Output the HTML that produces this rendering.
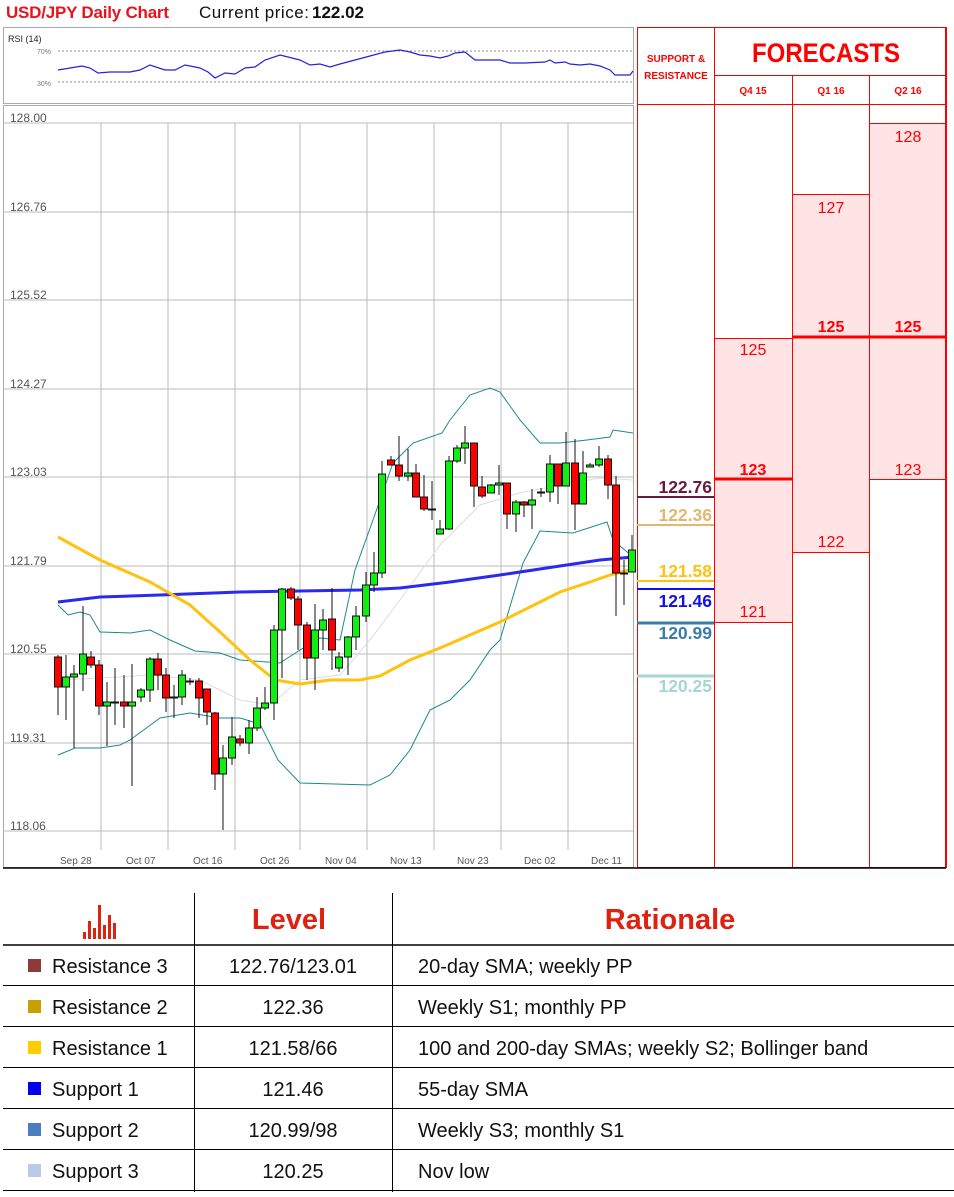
<!DOCTYPE html>
<html><head><meta charset="utf-8"><style>
body{margin:0;background:#fff;width:954px;height:1192px;overflow:hidden;font-family:"Liberation Sans",sans-serif}
svg text{font-family:"Liberation Sans",sans-serif}
</style></head><body>
<svg width="954" height="1192" viewBox="0 0 954 1192" xmlns="http://www.w3.org/2000/svg">
<text x="6" y="18" font-size="17" font-weight="bold" fill="#e8141c" textLength="163">USD/JPY Daily Chart</text>
<text x="199" y="18" font-size="17" fill="#111" textLength="110">Current price:</text>
<text x="312" y="18" font-size="17" font-weight="bold" fill="#111">122.02</text>
<rect x="3.5" y="27.5" width="630" height="76" fill="#fff" stroke="#aaa"/>
<text x="8" y="42" font-size="9" fill="#222">RSI (14)</text>
<text x="37" y="54" font-size="7" fill="#777">70%</text>
<text x="37" y="86" font-size="7" fill="#777">30%</text>
<line x1="58" y1="51" x2="633" y2="51" stroke="#666" stroke-dasharray="2,2" stroke-width="0.8"/>
<line x1="58" y1="82" x2="633" y2="82" stroke="#666" stroke-dasharray="2,2" stroke-width="0.8"/>
<polyline fill="none" stroke="#2222dd" stroke-width="1.2" points="58,70 70,68 82,66 90,68 98,73 110,72 130,72 140,70 150,65 165,70 175,70 185,65 200,68 208,72 215,78 225,73 235,74 245,68 255,67 265,60 280,55 300,60 310,65 320,64 330,67 340,64 355,60 370,56 385,52 400,50 410,52 420,55 430,56 440,58 448,56 455,53 465,52 475,60 490,60 500,60 510,63 525,63 545,62 550,60 555,63 565,62 570,64 580,65 590,64 600,66 610,70 615,75 630,75 633,71"/>
<rect x="3.5" y="105.5" width="630" height="762" fill="#fff" stroke="#aaa"/>
<g stroke="#bbb" stroke-width="1">
<line x1="3" y1="123" x2="633" y2="123"/><line x1="3" y1="212" x2="633" y2="212"/><line x1="3" y1="300" x2="633" y2="300"/><line x1="3" y1="389" x2="633" y2="389"/><line x1="3" y1="477" x2="633" y2="477"/><line x1="3" y1="566" x2="633" y2="566"/><line x1="3" y1="654" x2="633" y2="654"/><line x1="3" y1="743" x2="633" y2="743"/><line x1="3" y1="831" x2="633" y2="831"/>
<line x1="101" y1="123" x2="101" y2="850"/><line x1="168" y1="123" x2="168" y2="850"/><line x1="235" y1="123" x2="235" y2="850"/><line x1="300" y1="123" x2="300" y2="850"/><line x1="367" y1="123" x2="367" y2="850"/><line x1="434" y1="123" x2="434" y2="850"/><line x1="501" y1="123" x2="501" y2="850"/><line x1="568" y1="123" x2="568" y2="850"/>
</g>
<g font-size="12" fill="#555">
<text x="10" y="122">128.00</text><text x="10" y="211">126.76</text><text x="10" y="299">125.52</text><text x="10" y="388">124.27</text><text x="10" y="476">123.03</text><text x="10" y="565">121.79</text><text x="10" y="653">120.55</text><text x="10" y="742">119.31</text><text x="10" y="830">118.06</text>
</g>
<g font-size="10" fill="#555">
<text x="60" y="864">Sep 28</text><text x="126" y="864">Oct 07</text><text x="193" y="864">Oct 16</text><text x="260" y="864">Oct 26</text><text x="325" y="864">Nov 04</text><text x="390" y="864">Nov 13</text><text x="457" y="864">Nov 23</text><text x="524" y="864">Dec 02</text><text x="591" y="864">Dec 11</text>
</g>
<polyline fill="none" stroke="#ddd" stroke-width="1" points="58,680 100,678 150,675 200,680 240,700 270,705 300,680 340,675 370,640 400,600 440,545 480,505 520,493 560,485 600,478 633,480"/>
<polyline fill="none" stroke="#1a8a8a" stroke-width="1" points="58,605 68,615 80,612 90,615 100,632 130,633 150,630 170,640 195,651 220,653 240,660 280,663 300,650 320,638 340,640 355,570 373,520 393,463 413,443 442,433 450,420 470,395 490,388 500,392 520,420 540,443 560,443 587,440 610,437 613,430 633,433"/>
<polyline fill="none" stroke="#1a8a8a" stroke-width="1" points="58,755 75,748 100,748 120,745 130,740 160,718 190,713 220,718 240,718 260,724 278,760 300,783 370,785 390,775 410,750 430,710 450,700 470,680 490,650 500,640 523,563 540,531 573,533 607,522 613,540 633,557"/>
<polyline fill="none" stroke="#2a2aee" stroke-width="3" points="58,602 100,597 160,595 240,592 300,591 360,590 400,588 450,582 500,575 560,566 600,560 633,557"/>
<polyline fill="none" stroke="#ffc20e" stroke-width="3" points="58,537 100,560 150,582 190,605 220,632 250,660 275,680 300,684 330,680 360,680 380,676 410,660 440,648 470,635 500,622 530,607 560,592 590,582 610,575 633,569"/>
<g stroke="#111" stroke-width="1">
<line x1="58" y1="655" x2="58" y2="715"/><rect x="54.5" y="657" width="7" height="30" fill="#f00"/>
<line x1="66" y1="655" x2="66" y2="720"/><rect x="62.5" y="677" width="7" height="10" fill="#1e1"/>
<line x1="74" y1="665" x2="74" y2="748"/><rect x="70.5" y="674" width="7" height="3" fill="#1e1"/>
<line x1="83" y1="606" x2="83" y2="691"/><rect x="79.5" y="654" width="7" height="20" fill="#1e1"/>
<line x1="91" y1="651" x2="91" y2="668"/><rect x="87.5" y="657" width="7" height="8" fill="#f00"/>
<line x1="99" y1="660" x2="99" y2="715"/><rect x="95.5" y="665" width="7" height="41" fill="#f00"/>
<line x1="107" y1="682" x2="107" y2="746"/><rect x="103.5" y="702" width="7" height="4" fill="#1e1"/>
<line x1="115" y1="668" x2="115" y2="725"/><rect x="111.5" y="702" width="7" height="1" fill="#1e1"/>
<line x1="124" y1="675" x2="124" y2="728"/><rect x="120.5" y="702" width="7" height="4" fill="#f00"/>
<line x1="132" y1="664" x2="132" y2="786"/><rect x="128.5" y="702" width="7" height="4" fill="#1e1"/>
<line x1="141" y1="688" x2="141" y2="702"/><rect x="137.5" y="690" width="7" height="7" fill="#1e1"/>
<line x1="150" y1="657" x2="150" y2="702"/><rect x="146.5" y="659" width="7" height="31" fill="#1e1"/>
<line x1="158" y1="653" x2="158" y2="690"/><rect x="154.5" y="659" width="7" height="16" fill="#f00"/>
<line x1="166" y1="668" x2="166" y2="712"/><rect x="162.5" y="675" width="7" height="23" fill="#f00"/>
<line x1="174" y1="685" x2="174" y2="718"/><rect x="170.5" y="697" width="7" height="1" fill="#111"/>
<line x1="182" y1="670" x2="182" y2="705"/><rect x="178.5" y="675" width="7" height="22" fill="#1e1"/>
<line x1="190" y1="678" x2="190" y2="685"/><rect x="186.5" y="681" width="7" height="1" fill="#f00"/>
<line x1="199" y1="678" x2="199" y2="718"/><rect x="195.5" y="681" width="7" height="17" fill="#f00"/>
<line x1="207" y1="689" x2="207" y2="725"/><rect x="203.5" y="689" width="7" height="23" fill="#f00"/>
<line x1="215" y1="712" x2="215" y2="790"/><rect x="211.5" y="713" width="7" height="61" fill="#f00"/>
<line x1="223" y1="745" x2="223" y2="830"/><rect x="219.5" y="758" width="7" height="16" fill="#1e1"/>
<line x1="232" y1="717" x2="232" y2="765"/><rect x="228.5" y="737" width="7" height="21" fill="#1e1"/>
<line x1="240" y1="735" x2="240" y2="746"/><rect x="236.5" y="739" width="7" height="4" fill="#f00"/>
<line x1="249" y1="720" x2="249" y2="754"/><rect x="245.5" y="728" width="7" height="15" fill="#1e1"/>
<line x1="257" y1="697" x2="257" y2="731"/><rect x="253.5" y="708" width="7" height="20" fill="#1e1"/>
<line x1="265" y1="687" x2="265" y2="710"/><rect x="261.5" y="703" width="7" height="5" fill="#1e1"/>
<line x1="274" y1="625" x2="274" y2="720"/><rect x="270.5" y="630" width="7" height="73" fill="#1e1"/>
<line x1="282" y1="588" x2="282" y2="678"/><rect x="278.5" y="589" width="7" height="41" fill="#1e1"/>
<line x1="291" y1="587" x2="291" y2="600"/><rect x="287.5" y="589" width="7" height="9" fill="#f00"/>
<line x1="298" y1="596" x2="298" y2="650"/><rect x="294.5" y="599" width="7" height="26" fill="#f00"/>
<line x1="307" y1="622" x2="307" y2="680"/><rect x="303.5" y="625" width="7" height="33" fill="#f00"/>
<line x1="315" y1="604" x2="315" y2="690"/><rect x="311.5" y="630" width="7" height="28" fill="#1e1"/>
<line x1="323" y1="609" x2="323" y2="650"/><rect x="319.5" y="620" width="7" height="10" fill="#1e1"/>
<line x1="332" y1="588" x2="332" y2="670"/><rect x="328.5" y="619" width="7" height="31" fill="#f00"/>
<line x1="339" y1="652" x2="339" y2="672"/><rect x="335.5" y="657" width="7" height="11" fill="#1e1"/>
<line x1="348" y1="636" x2="348" y2="675"/><rect x="344.5" y="637" width="7" height="20" fill="#1e1"/>
<line x1="356" y1="606" x2="356" y2="650"/><rect x="352.5" y="616" width="7" height="21" fill="#1e1"/>
<line x1="366" y1="572" x2="366" y2="622"/><rect x="362.5" y="585" width="7" height="31" fill="#1e1"/>
<line x1="374" y1="552" x2="374" y2="592"/><rect x="370.5" y="573" width="7" height="12" fill="#1e1"/>
<line x1="382" y1="461" x2="382" y2="578"/><rect x="378.5" y="474" width="7" height="99" fill="#1e1"/>
<line x1="391" y1="456" x2="391" y2="465"/><rect x="387.5" y="460" width="7" height="5" fill="#f00"/>
<line x1="399" y1="436" x2="399" y2="481"/><rect x="395.5" y="465" width="7" height="11" fill="#f00"/>
<line x1="408" y1="449" x2="408" y2="481"/><rect x="404.5" y="473" width="7" height="3" fill="#1e1"/>
<line x1="416" y1="464" x2="416" y2="497"/><rect x="412.5" y="473" width="7" height="24" fill="#f00"/>
<line x1="424" y1="475" x2="424" y2="511"/><rect x="420.5" y="497" width="7" height="12" fill="#f00"/>
<line x1="432" y1="481" x2="432" y2="520"/><rect x="428.5" y="509" width="7" height="1" fill="#111"/>
<line x1="440" y1="520" x2="440" y2="534"/><rect x="436.5" y="529" width="7" height="5" fill="#1e1"/>
<line x1="449" y1="456" x2="449" y2="530"/><rect x="445.5" y="461" width="7" height="68" fill="#1e1"/>
<line x1="457" y1="445" x2="457" y2="463"/><rect x="453.5" y="448" width="7" height="13" fill="#1e1"/>
<line x1="465" y1="426" x2="465" y2="464"/><rect x="461.5" y="443" width="7" height="5" fill="#1e1"/>
<line x1="474" y1="443" x2="474" y2="507"/><rect x="470.5" y="443" width="7" height="43" fill="#f00"/>
<line x1="482" y1="476" x2="482" y2="498"/><rect x="478.5" y="487" width="7" height="9" fill="#f00"/>
<line x1="491" y1="484" x2="491" y2="493"/><rect x="487.5" y="485" width="7" height="8" fill="#1e1"/>
<line x1="499" y1="465" x2="499" y2="495"/><rect x="495.5" y="483" width="7" height="2" fill="#1e1"/>
<line x1="507" y1="483" x2="507" y2="529"/><rect x="503.5" y="483" width="7" height="31" fill="#f00"/>
<line x1="516" y1="500" x2="516" y2="532"/><rect x="512.5" y="502" width="7" height="12" fill="#1e1"/>
<line x1="524" y1="501" x2="524" y2="517"/><rect x="520.5" y="502" width="7" height="3" fill="#f00"/>
<line x1="532" y1="489" x2="532" y2="529"/><rect x="528.5" y="500" width="7" height="5" fill="#1e1"/>
<line x1="541" y1="488" x2="541" y2="497"/><rect x="537.5" y="492" width="7" height="1" fill="#111"/>
<line x1="550" y1="455" x2="550" y2="502"/><rect x="546.5" y="464" width="7" height="28" fill="#1e1"/>
<line x1="558" y1="464" x2="558" y2="504"/><rect x="554.5" y="464" width="7" height="22" fill="#f00"/>
<line x1="566" y1="432" x2="566" y2="486"/><rect x="562.5" y="463" width="7" height="23" fill="#1e1"/>
<line x1="575" y1="439" x2="575" y2="530"/><rect x="571.5" y="463" width="7" height="41" fill="#f00"/>
<line x1="583" y1="451" x2="583" y2="504"/><rect x="579.5" y="473" width="7" height="31" fill="#1e1"/>
<line x1="590" y1="463" x2="590" y2="467"/><rect x="586.5" y="465" width="7" height="2" fill="#1e1"/>
<line x1="599" y1="446" x2="599" y2="467"/><rect x="595.5" y="459" width="7" height="6" fill="#1e1"/>
<line x1="608" y1="455" x2="608" y2="499"/><rect x="604.5" y="459" width="7" height="26" fill="#f00"/>
<line x1="616" y1="476" x2="616" y2="616"/><rect x="612.5" y="485" width="7" height="88" fill="#f00"/>
<line x1="624" y1="560" x2="624" y2="605"/><rect x="620.5" y="573" width="7" height="1" fill="#111"/>
<line x1="632" y1="535" x2="632" y2="572"/><rect x="628.5" y="550" width="7" height="22" fill="#1e1"/>
</g>
<rect x="869" y="123" width="77" height="214" fill="#ffe4e6"/>
<rect x="792" y="194" width="77" height="143" fill="#ffe4e6"/>
<rect x="714" y="338" width="232" height="141" fill="#ffe4e6"/>
<rect x="714" y="479" width="155" height="73" fill="#ffe4e6"/>
<rect x="714" y="552" width="78" height="70" fill="#ffe4e6"/>
<g stroke="#f00" stroke-width="1" fill="none">
<rect x="637.5" y="27.5" width="309" height="840"/>
<line x1="946" y1="27" x2="946" y2="868" stroke-width="2"/>
<line x1="714.5" y1="27" x2="714.5" y2="868"/>
<line x1="792.5" y1="75" x2="792.5" y2="868"/>
<line x1="869.5" y1="75" x2="869.5" y2="868"/>
<line x1="714" y1="75.5" x2="946" y2="75.5"/>
<line x1="637" y1="104.5" x2="946" y2="104.5"/>
<line x1="869" y1="123.5" x2="946" y2="123.5"/>
<line x1="792" y1="194.5" x2="869" y2="194.5"/>
<line x1="714" y1="338.5" x2="792" y2="338.5"/>
<line x1="792" y1="337" x2="946" y2="337" stroke-width="3"/>
<line x1="714" y1="479" x2="792" y2="479" stroke-width="3"/>
<line x1="869" y1="479.5" x2="946" y2="479.5"/>
<line x1="792" y1="552.5" x2="869" y2="552.5"/>
<line x1="714" y1="622.5" x2="792" y2="622.5"/>
</g>
<g fill="#f00" text-anchor="middle">
<text x="676" y="62" font-size="10" font-weight="bold">SUPPORT &amp;</text>
<text x="676" y="79" font-size="10" font-weight="bold">RESISTANCE</text>
<text x="826" y="62" font-size="27" font-weight="bold" textLength="148" lengthAdjust="spacingAndGlyphs">FORECASTS</text>
<text x="753" y="94" font-size="10" font-weight="bold">Q4 15</text>
<text x="831" y="94" font-size="10" font-weight="bold">Q1 16</text>
<text x="908" y="94" font-size="10" font-weight="bold">Q2 16</text>
<g font-size="16"><text x="908" y="142">128</text><text x="831" y="213">127</text><text x="753" y="355">125</text><text x="908" y="475">123</text><text x="831" y="547">122</text><text x="753" y="617">121</text></g>
<g font-size="16" font-weight="bold"><text x="831" y="332">125</text><text x="908" y="332">125</text><text x="753" y="475">123</text></g>
</g>
<g font-size="17.5" font-weight="bold" text-anchor="end">
<text x="712" y="493" fill="#6a1a3a">122.76</text>
<text x="712" y="521" fill="#e0b870">122.36</text>
<text x="712" y="577" fill="#ffc20e">121.58</text>
<text x="712" y="607" fill="#1010ee">121.46</text>
<text x="712" y="639" fill="#3a7ea8">120.99</text>
<text x="712" y="692" fill="#a8d4d4">120.25</text>
</g>
<line x1="637" y1="497" x2="714" y2="497" stroke="#6a1a3a" stroke-width="2"/>
<line x1="637" y1="525" x2="714" y2="525" stroke="#e0b870" stroke-width="2"/>
<line x1="637" y1="581" x2="714" y2="581" stroke="#ffc20e" stroke-width="2"/>
<line x1="637" y1="589" x2="714" y2="589" stroke="#1010ee" stroke-width="2"/>
<line x1="637" y1="623" x2="714" y2="623" stroke="#3a7ea8" stroke-width="3"/>
<line x1="637" y1="676" x2="714" y2="676" stroke="#a8d4d4" stroke-width="3"/>
<line x1="3" y1="868" x2="946" y2="868" stroke="#000" stroke-width="1.5"/>
<g fill="#dd2211">
<rect x="83" y="932" width="3" height="7"/><rect x="88" y="921" width="3" height="18"/><rect x="93" y="928" width="3" height="11"/><rect x="98" y="905" width="3" height="34"/><rect x="103" y="925" width="3" height="14"/><rect x="108" y="915" width="3" height="24"/><rect x="113" y="923" width="3" height="16"/>
</g>
<text x="289" y="929" font-size="29" font-weight="bold" fill="#dd2211" text-anchor="middle">Level</text>
<text x="670" y="929" font-size="29" font-weight="bold" fill="#dd2211" text-anchor="middle">Rationale</text>
<g stroke="#000" stroke-width="1">
<line x1="194.5" y1="893" x2="194.5" y2="1192"/><line x1="392.5" y1="893" x2="392.5" y2="1192"/>
<line x1="3" y1="945" x2="954" y2="945" stroke-width="1.5"/>
<line x1="3" y1="1026.5" x2="954" y2="1026.5"/><line x1="3" y1="1067.5" x2="954" y2="1067.5"/><line x1="3" y1="1108.5" x2="954" y2="1108.5"/><line x1="3" y1="1149.5" x2="954" y2="1149.5"/><line x1="3" y1="1190.5" x2="954" y2="1190.5"/>
</g>
<line x1="3" y1="985.5" x2="954" y2="985.5" stroke="#000"/>
<g font-size="20" fill="#111">
<rect x="28" y="959" width="13" height="13" fill="#8e3a3a"/><text x="52" y="973">Resistance 3</text><text x="293" y="973" text-anchor="middle">122.76/123.01</text><text x="418" y="973">20-day SMA; weekly PP</text>
<rect x="28" y="1000" width="13" height="13" fill="#c8a000"/><text x="52" y="1014">Resistance 2</text><text x="293" y="1014" text-anchor="middle">122.36</text><text x="418" y="1014">Weekly S1; monthly PP</text>
<rect x="28" y="1041" width="13" height="13" fill="#ffcc00"/><text x="52" y="1055">Resistance 1</text><text x="293" y="1055" text-anchor="middle">121.58/66</text><text x="418" y="1055">100 and 200-day SMAs; weekly S2; Bollinger band</text>
<rect x="28" y="1082" width="13" height="13" fill="#0000ee"/><text x="52" y="1096">Support 1</text><text x="293" y="1096" text-anchor="middle">121.46</text><text x="418" y="1096">55-day SMA</text>
<rect x="28" y="1123" width="13" height="13" fill="#4a7ec0"/><text x="52" y="1137">Support 2</text><text x="293" y="1137" text-anchor="middle">120.99/98</text><text x="418" y="1137">Weekly S3; monthly S1</text>
<rect x="28" y="1164" width="13" height="13" fill="#b8cce8"/><text x="52" y="1178">Support 3</text><text x="293" y="1178" text-anchor="middle">120.25</text><text x="418" y="1178">Nov low</text>
</g>
</svg>
</body></html>
